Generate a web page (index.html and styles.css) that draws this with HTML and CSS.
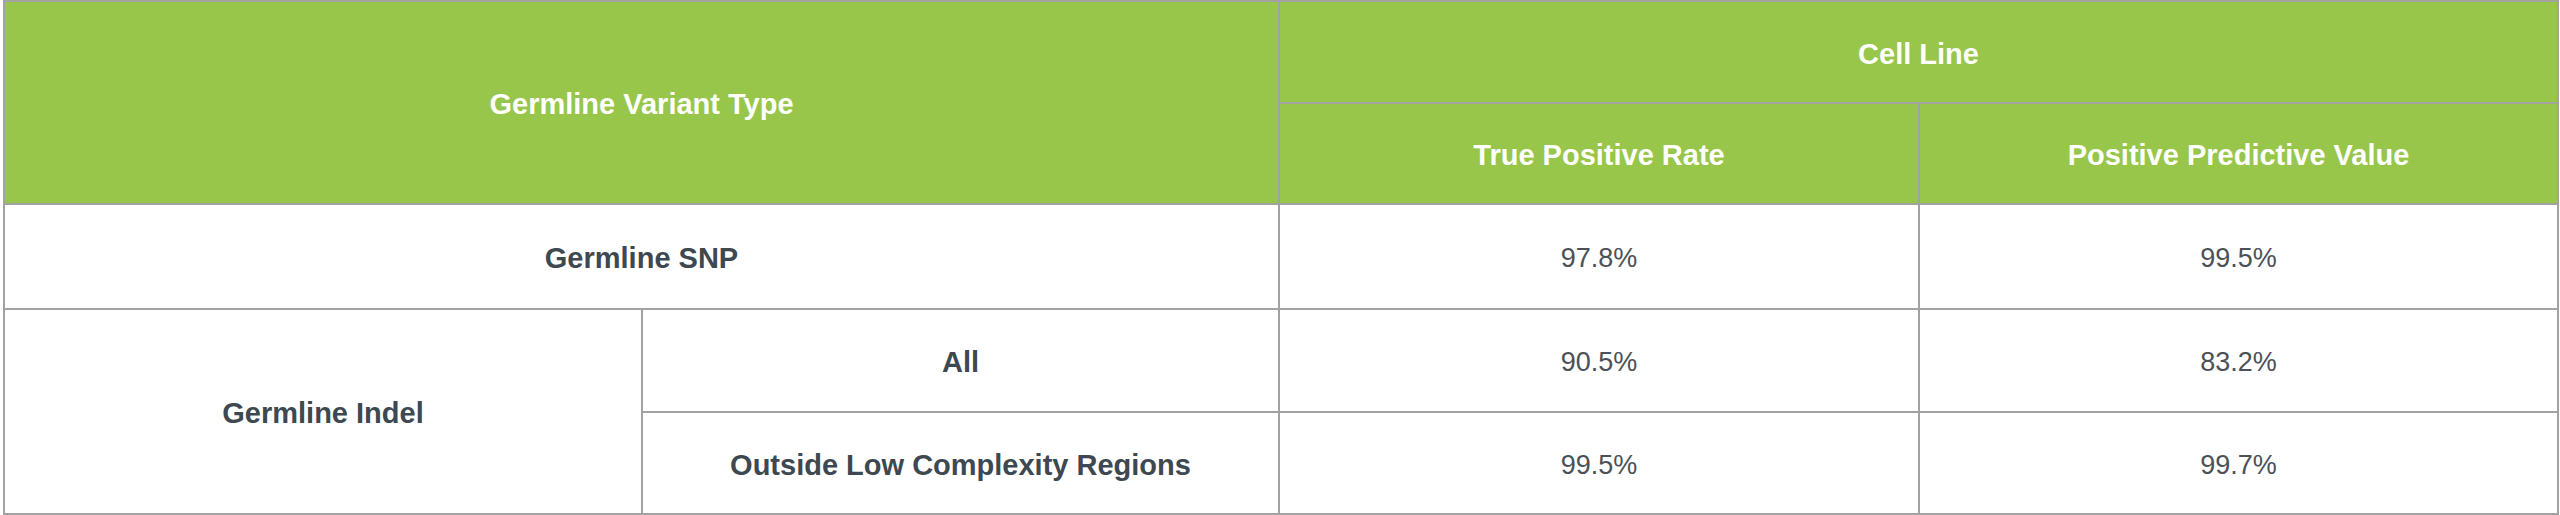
FILE: index.html
```html
<!DOCTYPE html>
<html lang="en">
<head>
<meta charset="utf-8">
<title>Germline Variant Performance</title>
<link rel="stylesheet" href="styles.css">
</head>
<body>
<table class="perf">
  <colgroup>
    <col class="c1"><col class="c2"><col class="c3"><col class="c4">
  </colgroup>
  <thead>
    <tr class="r1">
      <th colspan="2" rowspan="2">Germline Variant Type</th>
      <th colspan="2">Cell Line</th>
    </tr>
    <tr class="r2">
      <th>True Positive Rate</th>
      <th>Positive Predictive Value</th>
    </tr>
  </thead>
  <tbody>
    <tr class="r3">
      <td colspan="2" class="label">Germline SNP</td>
      <td class="val">97.8%</td>
      <td class="val">99.5%</td>
    </tr>
    <tr class="r4">
      <td rowspan="2" class="label">Germline Indel</td>
      <td class="label">All</td>
      <td class="val">90.5%</td>
      <td class="val">83.2%</td>
    </tr>
    <tr class="r5">
      <td class="label">Outside Low Complexity Regions</td>
      <td class="val">99.5%</td>
      <td class="val">99.7%</td>
    </tr>
  </tbody>
</table>
</body>
</html>
```
FILE: styles.css
```css
html, body {
  margin: 0;
  padding: 0;
  background: #ffffff;
}
body {
  padding-left: 3px;
  font-family: "Liberation Sans", Arial, sans-serif;
}
.perf {
  border-collapse: collapse;
  table-layout: fixed;
  width: 2556px;
}
.c1 { width: 638px; }
.c2 { width: 637px; }
.c3 { width: 640px; }
.c4 { width: 639px; }
.perf th, .perf td {
  border: 2px solid #a2a2a2;
  text-align: center;
  vertical-align: middle;
  padding: 4px 0 0 0;
}
.perf th {
  background: #98c64a;
  color: #ffffff;
  font-weight: bold;
  font-size: 29px;
}
.r1 { height: 102px; }
.r2 { height: 101px; }
.r3 { height: 105px; }
.r4 { height: 103px; }
.r5 { height: 102px; }
.label {
  color: #3d4850;
  font-weight: bold;
  font-size: 29px;
}
.val {
  color: #4b5157;
  font-size: 27px;
}
```
